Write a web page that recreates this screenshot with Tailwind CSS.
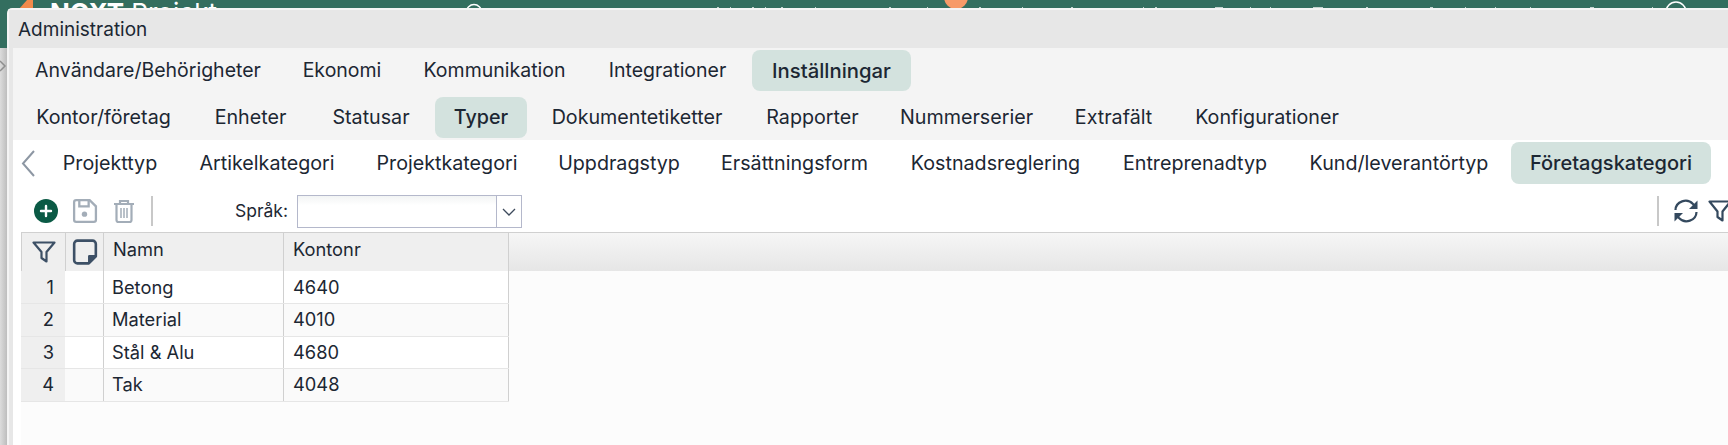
<!DOCTYPE html>
<html><head><meta charset="utf-8"><script src="https://cdn.jsdelivr.net/npm/@tailwindcss/browser@4"></script></head>
<body class="m-0 p-0 overflow-hidden bg-white">
<div class="relative w-[1728px] h-[445px] overflow-hidden bg-[#f4f4f4] font-['Inter',sans-serif] text-[#1c2733]">
  <!-- backdrop app bar -->
  <div class="h-[48px] bg-[#336e5f] overflow-hidden relative">
    <svg class="absolute left-0 top-0 w-[1728px] h-[9px]" viewBox="0 0 1728 9"><path d="M19 9L27 0H33V9Z" fill="#f28a4b"/><circle cx="956" cy="-3" r="12" fill="#f79a68"/><circle cx="474" cy="12" r="7.500" fill="none" stroke="#fff" stroke-width="1.500"/><circle cx="1676" cy="12" r="10" fill="none" stroke="#fff" stroke-width="1.500"/><path d="M717 7.500h2M730 7.500h1M752 7.500h2M765 7.500h1M781 7.500h2M815 7.500h1M889 7.500h2M927 7.500h1M979 7.500h2M1022 7.500h1M1071 7.500h2M1143 7.500h1M1155 7.500h2M1215 7.500h8M1250 7.500h1M1270 7.500h1M1313 7.500h10M1366 7.500h2M1430 7.500h3M1465 7.500h1M1495 7.500h1M1530 7.500h1M1590 7.500h4M1652 7.500h1" stroke="#fff" stroke-width="1" opacity=".7"/></svg>
    <div class="absolute left-[50px] top-0 text-[26px] leading-[26px] text-white whitespace-nowrap"><span class="font-bold">NOXT</span> Projekt</div>
  </div>
  <div class="absolute left-0 top-[48px] bottom-0 w-[7px] bg-gradient-to-r from-[#dcdcdc] to-[#bdbdbd]">
    <svg class="w-[7px] h-[18px] mt-[9px]" viewBox="0 0 7 18" fill="none" stroke="#8f8f8f" stroke-width="1.500"><path d="M0 4l5 5-5 5"/></svg>
  </div>
  <!-- window -->
  <div class="absolute left-[7px] top-[8px] right-0 bottom-0 bg-[#e7e7e7] border-t-2 border-l-2 border-[#f4f4f4] rounded-tl-[5px] flex flex-col">
    <div class="h-[38px] bg-[#e7e7e7] pl-[9px] pt-[1px] text-[19px] leading-[37px]">Administration</div>
    <div class="flex-1 ml-[4px] flex flex-col">
      <div class="h-[46px] bg-[#f4f4f4] flex items-start gap-[2px] pt-[2px] pl-[2px] text-[19.500px] leading-[41px]">
        <div class="h-[41px] w-[266px] text-center whitespace-nowrap">Användare/Behörigheter</div>
        <div class="h-[41px] w-[118px] text-center whitespace-nowrap">Ekonomi</div>
        <div class="h-[41px] w-[183px] text-center whitespace-nowrap">Kommunikation</div>
        <div class="h-[41px] w-[159px] text-center whitespace-nowrap">Integrationer</div>
        <div class="h-[41px] w-[159px] ml-[3px] text-center whitespace-nowrap text-[20.300px] font-medium rounded-[8px] bg-[#d3e2de]">Inställningar</div>
      </div>
      <div class="h-[46px] bg-[#f4f4f4] flex items-start gap-[3px] pl-[3px] pt-[3px] text-[19.700px] leading-[41px]">
        <div class="h-[41px] w-[175px] text-center whitespace-nowrap">Kontor/företag</div>
        <div class="h-[41px] w-[113px] text-center whitespace-nowrap">Enheter</div>
        <div class="h-[41px] w-[122px] text-center whitespace-nowrap">Statusar</div>
        <div class="h-[41px] w-[92px] text-center whitespace-nowrap font-medium rounded-[8px] bg-[#d3e2de]">Typer</div>
        <div class="h-[41px] w-[214px] text-center whitespace-nowrap">Dokumentetiketter</div>
        <div class="h-[41px] w-[131px] text-center whitespace-nowrap">Rapporter</div>
        <div class="h-[41px] w-[171px] text-center whitespace-nowrap">Nummerserier</div>
        <div class="h-[41px] w-[117px] text-center whitespace-nowrap">Extrafält</div>
        <div class="h-[41px] w-[184px] text-center whitespace-nowrap">Konfigurationer</div>
      </div>
      <div class="h-[52px] bg-white flex items-start gap-[3px] pt-[2px] text-[19.700px] leading-[42px]">
        <svg class="w-[18px] h-[42px] ml-[6px] mr-[3px] shrink-0" viewBox="0 0 18 42" fill="none" stroke="#8d97a3" stroke-width="2"><path d="M15 9 L4 21.500 L15 34"/></svg>
        <div class="h-[42px] w-[134px] text-center whitespace-nowrap shrink-0">Projekttyp</div>
        <div class="h-[42px] w-[174px] text-center whitespace-nowrap shrink-0">Artikelkategori</div>
        <div class="h-[42px] w-[180px] text-center whitespace-nowrap shrink-0">Projektkategori</div>
        <div class="h-[42px] w-[158px] text-center whitespace-nowrap shrink-0">Uppdragstyp</div>
        <div class="h-[42px] w-[187px] text-center whitespace-nowrap shrink-0">Ersättningsform</div>
        <div class="h-[42px] w-[209px] text-center whitespace-nowrap shrink-0">Kostnadsreglering</div>
        <div class="h-[42px] w-[184px] text-center whitespace-nowrap shrink-0">Entreprenadtyp</div>
        <div class="h-[42px] w-[218px] text-center whitespace-nowrap shrink-0">Kund/leverantörtyp</div>
        <div class="h-[42px] w-[200px] text-center whitespace-nowrap shrink-0 text-[20px] font-medium rounded-[8px] bg-[#d3e2de]">Företagskategori</div>
      </div>
      <!-- toolbar -->
      <div class="h-[40px] bg-white flex items-start pt-[4px] relative">
        <svg class="w-[26px] h-[26px] ml-[20px] mt-[2px] shrink-0" viewBox="0 0 26 26"><circle cx="13" cy="13" r="12" fill="#0b5a45"/><path d="M13 8v10M8 13h10" stroke="#fff" stroke-width="2.400" stroke-linecap="round"/></svg>
        <svg class="w-[27px] h-[27px] ml-[12px] mt-[1px] shrink-0" viewBox="0 0 26 26" fill="none" stroke="#a3adb8" stroke-width="2.200"><path d="M3 5a2 2 0 0 1 2-2h13l6 6v13a2 2 0 0 1-2 2H5a2 2 0 0 1-2-2z"/><path d="M8 3v6h9V3"/><circle cx="13" cy="16.500" r="2.600" fill="#a3adb8" stroke="none"/></svg>
        <svg class="w-[24px] h-[26px] ml-[14px] mt-[2px] shrink-0" viewBox="0 0 24 26" fill="none" stroke="#a3adb8" stroke-width="2.200"><path d="M2 6h20M8 6V3h8v3M4.500 6v16a2 2 0 0 0 2 2h11a2 2 0 0 0 2-2V6"/><path d="M9 10v10M12 10v10M15 10v10" stroke-width="1.500"/></svg>
        <div class="w-[2px] h-[30px] bg-[#c8c8c8] ml-[15px] shrink-0"></div>
        <div class="text-[17.500px] leading-[30px] ml-[82px] mr-[9px]">Språk:</div>
        <div class="w-[225px] h-[33px] -mt-[1px] border border-[#b4b8cb] flex items-stretch bg-gradient-to-b from-[#f2f4f4] to-white to-30%">
          <div class="flex-1 border-r border-[#b4b8cb]"></div>
          <div class="w-[24px] bg-white flex items-center justify-center"><svg class="w-[14px] h-[8px]" viewBox="0 0 14 8" fill="none" stroke="#3d4a5c" stroke-width="1.300"><path d="M1 1l6 6 6-6"/></svg></div>
        </div>
        <div class="flex-1"></div>
        <div class="w-[2px] h-[30px] bg-[#c8c8c8] mr-[14px] shrink-0"></div>
        <svg class="w-[26px] h-[26px] mr-[9px] mt-[2px] shrink-0" viewBox="0 0 26 26" fill="none" stroke="#34495e" stroke-width="2.200"><path d="M2.500 12a10 9.500 0 0 1 17.500-6l3 3.500"/><path d="M24.500 2.500v8.500h-8.500z" fill="#34495e" stroke="none"/><path d="M23.500 14a10 9.500 0 0 1-17.500 6l-3-3.500"/><path d="M1.500 23.500v-8.500h8.500z" fill="#34495e" stroke="none"/></svg>
        <svg class="w-[24px] h-[24px] mt-[3px] -mr-[4px] shrink-0" viewBox="0 0 24 24" fill="none" stroke="#34495e" stroke-width="2.200" stroke-linejoin="round"><path d="M1.500 2.500h21l-8 10v9l-5-3.500v-5.500z"/></svg>
      </div>
      <!-- grid -->
      <div class="flex-1 bg-white">
      <div class="h-full bg-[#fcfcfc] ml-[8px]">
        <div class="border-t border-[#d0d0d0] h-[39px] bg-gradient-to-b from-[#f6f6f6] to-[#e6e6e6] flex">
          <div class="w-[45px] h-[38px] bg-[#efefef] border-l border-r border-[#d0d0d0] flex items-center justify-center"><svg class="w-[24px] h-[22px]" viewBox="0 0 24 22" fill="none" stroke="#3d5066" stroke-width="2.200" stroke-linejoin="round"><path d="M1.500 1.500h21l-8 9.500v9.500l-5-3.500v-6z"/></svg></div>
          <div class="w-[38px] h-[38px] bg-[#efefef] border-r border-[#d0d0d0] flex items-center justify-center"><svg class="w-[26px] h-[26px]" viewBox="0 0 24 24" fill="none" stroke="#3d5066" stroke-width="2.400" stroke-linejoin="round"><path d="M5 1.500h14a3 3 0 0 1 3 3V16l-6.500 6.500H5a3 3 0 0 1-3-3V4.500a3 3 0 0 1 3-3z"/><path d="M16 22v-6h6" fill="#3d5066"/></svg></div>
          <div class="w-[180px] h-[38px] bg-[#efefef] border-r border-[#d0d0d0] pl-[9px] text-[18.300px] leading-[32px]">Namn</div>
          <div class="w-[225px] h-[38px] bg-[#efefef] border-r border-[#d0d0d0] pl-[9px] text-[18.300px] leading-[32px]">Kontonr</div>
        </div>
        <div class="w-[488px] text-[18.300px]">
          <div class="flex h-[33px] bg-white border-b border-[#e6e6e6]"><div class="w-[44px] bg-[#efefef] text-right pr-[11px] leading-[32px]">1</div><div class="w-[39px] border-r border-[#d0d0d0]"></div><div class="w-[180px] border-r border-[#d0d0d0] pl-[8px] leading-[32px]">Betong</div><div class="w-[225px] border-r border-[#d0d0d0] pl-[9px] leading-[32px]">4640</div></div>
          <div class="flex h-[33px] bg-[#fafafa] border-b border-[#e6e6e6]"><div class="w-[44px] bg-[#efefef] text-right pr-[11px] leading-[31px]">2</div><div class="w-[39px] border-r border-[#d0d0d0]"></div><div class="w-[180px] border-r border-[#d0d0d0] pl-[8px] leading-[31px]">Material</div><div class="w-[225px] border-r border-[#d0d0d0] pl-[9px] leading-[31px]">4010</div></div>
          <div class="flex h-[32px] bg-white border-b border-[#e6e6e6]"><div class="w-[44px] bg-[#efefef] text-right pr-[11px] leading-[31px]">3</div><div class="w-[39px] border-r border-[#d0d0d0]"></div><div class="w-[180px] border-r border-[#d0d0d0] pl-[8px] leading-[31px]">Stål &amp; Alu</div><div class="w-[225px] border-r border-[#d0d0d0] pl-[9px] leading-[31px]">4680</div></div>
          <div class="flex h-[33px] bg-[#fafafa] border-b border-[#e6e6e6]"><div class="w-[44px] bg-[#efefef] text-right pr-[11px] leading-[31px]">4</div><div class="w-[39px] border-r border-[#d0d0d0]"></div><div class="w-[180px] border-r border-[#d0d0d0] pl-[8px] leading-[31px]">Tak</div><div class="w-[225px] border-r border-[#d0d0d0] pl-[9px] leading-[31px]">4048</div></div>
        </div>
      </div>
      </div>
    </div>
  </div>
</div>
</body></html>
